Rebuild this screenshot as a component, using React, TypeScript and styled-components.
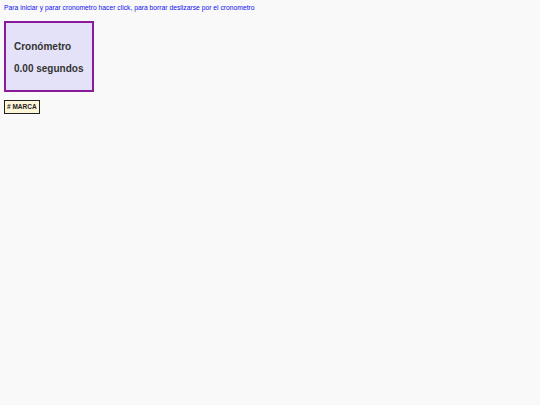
import React from "react";
import styled, { createGlobalStyle } from "styled-components";

const GlobalStyle = createGlobalStyle`
  body {
    margin: 0;
    background: #f9f9f9;
    font-family: "Liberation Sans", Arial, sans-serif;
  }
`;

const Page = styled.div`
  padding: 4px;
  display: flex;
  flex-direction: column;
  align-items: flex-start;
`;

const Hint = styled.p`
  margin: 0;
  color: #1010f0;
  font-size: 6.75px;
  line-height: 8px;
`;

const Stopwatch = styled.div`
  margin-top: 9px;
  box-sizing: border-box;
  width: 90px;
  height: 71px;
  border: 2px solid #8b1a9b;
  background: #e4e2f8;
  padding: 18px 0 0 8px;
  display: flex;
  flex-direction: column;
  gap: 11px;
`;

const Label = styled.div`
  color: #333;
  font-weight: bold;
  font-size: 10px;
  line-height: 11px;
`;

const MarkButton = styled.button`
  margin-top: 8px;
  padding: 2px 2px;
  font-family: "Liberation Sans", Arial, sans-serif;
  font-weight: bold;
  font-size: 6.5px;
  line-height: 8px;
  color: #222;
  background: #fdf5d8;
  border: 1px solid #222;
  border-radius: 0;
`;

export default function App() {
  return (
    <>
      <GlobalStyle />
      <Page>
        <Hint>
          Para iniciar y parar cronometro hacer click, para borrar deslizarse por el cronometro
        </Hint>
        <Stopwatch>
          <Label>Cronómetro</Label>
          <Label>0.00 segundos</Label>
        </Stopwatch>
        <MarkButton># MARCA</MarkButton>
      </Page>
    </>
  );
}
